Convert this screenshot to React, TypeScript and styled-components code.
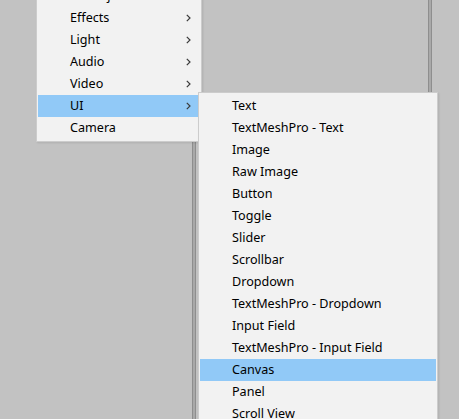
import React from 'react'
import styled, { createGlobalStyle } from 'styled-components'

const GlobalStyle = createGlobalStyle`
  html, body {
    margin: 0;
    padding: 0;
    background: #c2c2c2;
  }
  body {
    font-family: "Noto Sans", "Segoe UI", sans-serif;
  }
`

const Workspace = styled.div`
  position: relative;
  width: 459px;
  height: 419px;
  overflow: hidden;
  display: flex;
  background: #c2c2c2;
`

const Panel = styled.div<{ width?: number }>`
  flex: ${({ width }) => (width ? `0 0 ${width}px` : '1 1 auto')};
  background: #c2c2c2;
`

const Splitter = styled.div`
  flex: 0 0 4px;
  box-sizing: border-box;
  border-left: 1px solid #8e8e8e;
  border-right: 1px solid #8e8e8e;
  background: #a9a9a9;
`

const Menu = styled.div<{ left: number; top: number; width: number }>`
  position: absolute;
  left: ${({ left }) => left}px;
  top: ${({ top }) => top}px;
  width: ${({ width }) => width}px;
  box-sizing: border-box;
  display: flex;
  flex-direction: column;
  padding: 2px 1px;
  background: #f2f2f2;
  border: 1px solid #cccccc;
  box-shadow: 1px 1px 2px rgba(0, 0, 0, 0.1);
`

const Item = styled.div<{ active?: boolean }>`
  height: 22px;
  display: flex;
  align-items: center;
  padding: 0 9px 0 32px;
  background: ${({ active }) => (active ? '#91c9f7' : 'transparent')};
  color: #000;
  font-size: 12.6px;
  white-space: nowrap;
`

const Label = styled.span`
  flex: 1;
  line-height: 22px;
`

const Arrow = () => (
  <svg width="5" height="8" viewBox="0 0 5 8">
    <polyline points="0.8,0.8 4,4 0.8,7.2" fill="none" stroke="#3a3a3a" strokeWidth="1.2" />
  </svg>
)

const mainItems = ['3D Object', '2D Object', 'Effects', 'Light', 'Audio', 'Video', 'UI', 'Camera']
const subItems = [
  'Text',
  'TextMeshPro - Text',
  'Image',
  'Raw Image',
  'Button',
  'Toggle',
  'Slider',
  'Scrollbar',
  'Dropdown',
  'TextMeshPro - Dropdown',
  'Input Field',
  'TextMeshPro - Input Field',
  'Canvas',
  'Panel',
  'Scroll View',
  'Event System',
]

export default function App() {
  return (
    <>
      <GlobalStyle />
      <Workspace>
        <Panel width={192} />
        <Splitter />
        <Panel width={232} />
        <Splitter />
        <Panel />
        <Menu left={36} top={-40} width={166}>
          {mainItems.map((name) => (
            <Item key={name} active={name === 'UI'}>
              <Label>{name}</Label>
              {name !== 'Camera' && <Arrow />}
            </Item>
          ))}
        </Menu>
        <Menu left={198} top={92} width={240}>
          {subItems.map((name) => (
            <Item key={name} active={name === 'Canvas'}>
              <Label>{name}</Label>
            </Item>
          ))}
        </Menu>
      </Workspace>
    </>
  )
}
